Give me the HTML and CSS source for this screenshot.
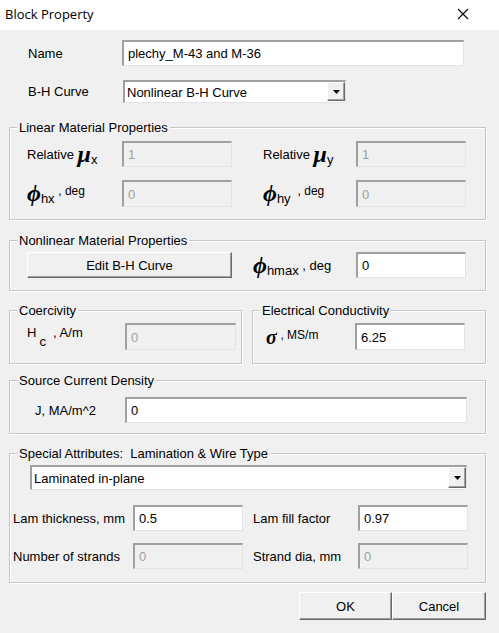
FILE: index.html
```html
<!DOCTYPE html>
<html>
<head>
<meta charset="utf-8">
<title>Block Property</title>
<link rel="stylesheet" href="styles.css">
</head>
<body>
<div class="dialog">
  <div class="titlebar">
    <span class="title">Block Property</span>
    <svg class="close" width="12" height="12" viewBox="0 0 12 12"><path d="M1 1 L11 11 M11 1 L1 11" stroke="#000" stroke-width="1.1" fill="none"/></svg>
  </div>
  <div class="content">
    <div class="row row-name">
      <span class="lbl lbl-name">Name</span>
      <div class="field w342">plechy_M-43 and M-36</div>
    </div>
    <div class="row row-bh">
      <span class="lbl lbl-bh">B-H Curve</span>
      <div class="select w223"><span class="sel-val">Nonlinear B-H Curve</span><span class="arrow"><svg width="7" height="4" viewBox="0 0 7 4"><path d="M0 0 H7 L3.5 4 Z" fill="#000"/></svg></span></div>
    </div>

    <div class="group g-linear">
      <span class="legend">Linear Material Properties</span>
      <div class="row lin-row h26">
        <span class="lbl w95">Relative <span class="greek mu">μ</span><span class="sub">x</span></span>
        <div class="field disabled w110">1</div>
        <span class="lbl w93 ml31">Relative <span class="greek mu">μ</span><span class="sub">y</span></span>
        <div class="field disabled w110">1</div>
      </div>
      <div class="row lin-row h27 mt13">
        <span class="lbl w95"><span class="greek phi">ϕ</span><span class="sub">hx</span> <span class="sup">, deg</span></span>
        <div class="field disabled w110">0</div>
        <span class="lbl w93 ml31"><span class="greek phi">ϕ</span><span class="sub">hy</span> <span class="sup">&nbsp;, deg</span></span>
        <div class="field disabled w110">0</div>
      </div>
    </div>

    <div class="group g-nonlinear">
      <span class="legend">Nonlinear Material Properties</span>
      <div class="row h26">
        <div class="btn w205">Edit B-H Curve</div>
        <span class="lbl w103 ml21"><span class="greek phi">ϕ</span><span class="sub">hmax</span> , deg</span>
        <div class="field w110">0</div>
      </div>
    </div>

    <div class="pair">
      <div class="group g-coer">
        <span class="legend">Coercivity</span>
        <div class="row h27">
          <span class="lbl w98">H<span class="subc">c</span> &nbsp;, A/m</span>
          <div class="field disabled w111">0</div>
        </div>
      </div>
      <div class="group g-cond">
        <span class="legend">Electrical Conductivity</span>
        <div class="row h27">
          <span class="lbl w89"><span class="greek sigma">σ</span> <span class="small">, MS/m</span></span>
          <div class="field w110">6.25</div>
        </div>
      </div>
    </div>

    <div class="group g-source">
      <span class="legend">Source Current Density</span>
      <div class="row h26">
        <span class="lbl w90">J, MA/m^2</span>
        <div class="field w342">0</div>
      </div>
    </div>

    <div class="group g-special">
      <span class="legend">Special Attributes:&nbsp; Lamination &amp; Wire Type</span>
      <div class="select w437 sel-lam"><span class="sel-val">Laminated in-plane</span><span class="arrow"><svg width="7" height="4" viewBox="0 0 7 4"><path d="M0 0 H7 L3.5 4 Z" fill="#000"/></svg></span></div>
      <div class="row h26 mt15 sp-row">
        <span class="lbl w120">Lam thickness, mm</span>
        <div class="field w110">0.5</div>
        <span class="lbl w105 ml10">Lam fill factor</span>
        <div class="field w110">0.97</div>
      </div>
      <div class="row h26 mt12 sp-row">
        <span class="lbl w120">Number of strands</span>
        <div class="field disabled w110">0</div>
        <span class="lbl w105 ml10">Strand dia, mm</span>
        <div class="field disabled w110">0</div>
      </div>
    </div>

    <div class="buttons">
      <div class="btn w93">OK</div>
      <div class="btn w94">Cancel</div>
    </div>
  </div>
</div>
</body>
</html>
```

FILE: styles.css
```css
html, body {
  margin: 0;
  padding: 0;
}
body {
  width: 499px;
  height: 633px;
  background: #f0f0f0;
  font-family: "Liberation Sans", Arial, sans-serif;
  font-size: 13px;
  color: #000;
  overflow: hidden;
}
.dialog {
  width: 499px;
  height: 633px;
  background: #f0f0f0;
}
.titlebar {
  height: 30px;
  background: #fff;
  display: flex;
  align-items: center;
  justify-content: space-between;
  padding: 0 30px 0 5px;
  box-sizing: border-box;
}
.title {
  font-family: "Open Sans", "Noto Sans", sans-serif;
  font-size: 13px;
  margin-top: -2px;
}
.close {
  margin-top: -2px;
}
.content {
  width: 477px;
  margin-left: 9px;
  padding-top: 10px;
}
.row {
  display: flex;
  align-items: center;
}
.row-name { height: 26px; padding-left: 19px; }
.row-bh { height: 23px; padding-left: 19px; margin-top: 14px; }
.lbl-name { width: 94px; }
.lbl-bh { width: 95px; }
.lbl { white-space: nowrap; }

.h26 { height: 26px; }
.h27 { height: 27px; }
.mt12 { margin-top: 12px; }
.mt13 { margin-top: 13px; }
.mt15 { margin-top: 15px; }
.ml10 { margin-left: 10px; }
.ml21 { margin-left: 21px; }
.ml31 { margin-left: 31px; }

.w89 { width: 89px; }
.w90 { width: 90px; }
.w93 { width: 93px; }
.w94 { width: 94px; }
.w95 { width: 95px; }
.w98 { width: 98px; }
.w103 { width: 103px; }
.w105 { width: 105px; }
.w110 { width: 110px; }
.w111 { width: 111px; }
.w120 { width: 120px; }
.w205 { width: 205px; }
.w223 { width: 223px; }
.w342 { width: 342px; }
.w437 { width: 437px; }

.field {
  box-sizing: border-box;
  height: 100%;
  background: #fff;
  border-top: 2px solid #a0a0a0;
  border-left: 2px solid #a0a0a0;
  border-right: 1px solid #e3e3e3;
  border-bottom: 1px solid #e3e3e3;
  padding-left: 4px;
  display: flex;
  align-items: center;
  white-space: nowrap;
  flex: none;
}
.field.disabled {
  background: #f0f0f0;
  color: #a0a0a0;
}

.select {
  box-sizing: border-box;
  height: 100%;
  background: #fff;
  border-top: 2px solid #a0a0a0;
  border-left: 2px solid #a0a0a0;
  border-right: 1px solid #e3e3e3;
  border-bottom: 1px solid #e3e3e3;
  display: flex;
  align-items: stretch;
  flex: none;
}
.sel-val {
  flex: 1;
  display: flex;
  align-items: center;
  padding-left: 2px;
}
.arrow {
  width: 18px;
  box-sizing: border-box;
  background: #f0f0f0;
  border-top: 1px solid #fff;
  border-left: 1px solid #fff;
  border-right: 1px solid #696969;
  border-bottom: 1px solid #696969;
  box-shadow: inset -1px -1px #a0a0a0;
  display: flex;
  align-items: center;
  justify-content: center;
  margin: 0 0 1px 0;
}
.sel-lam {
  height: 25px;
  margin-left: 20px;
}

.group {
  position: relative;
  box-sizing: border-box;
  border: 1px solid #c6c6c6;
  box-shadow: 1px 1px 0 #fff, inset 1px 1px 0 #fff;
}
.legend {
  position: absolute;
  left: 7px;
  top: -8px;
  padding: 0 2px;
  line-height: 15px;
  background: #f0f0f0;
  white-space: nowrap;
}
.g-linear {
  margin-top: 24px;
  height: 93px;
  padding: 13px 0 0 17px;
}
.g-nonlinear {
  margin-top: 20px;
  height: 51px;
  padding: 11px 0 0 17px;
}
.pair {
  display: flex;
  margin-top: 19px;
  gap: 10px;
}
.g-coer {
  width: 233px;
  height: 54px;
  padding: 12px 0 0 17px;
}
.g-cond {
  width: 234px;
  height: 54px;
  padding: 12px 0 0 13px;
}
.g-source {
  margin-top: 16px;
  height: 54px;
  padding: 16px 0 0 25px;
}
.g-special {
  margin-top: 19px;
  height: 130px;
  padding-top: 11px;
}
.sp-row {
  padding-left: 3px;
}

.btn {
  box-sizing: border-box;
  height: 100%;
  background: #f0f0f0;
  border-top: 1px solid #fff;
  border-left: 1px solid #fff;
  border-right: 1px solid #696969;
  border-bottom: 1px solid #696969;
  box-shadow: inset -1px -1px #a0a0a0;
  display: flex;
  align-items: center;
  justify-content: center;
  flex: none;
}
.buttons {
  display: flex;
  justify-content: flex-end;
  height: 28px;
  margin-top: 9px;
}

.greek {
  font-family: "Liberation Serif", "DejaVu Serif", serif;
  font-weight: bold;
  font-style: italic;
}
.mu {
  font-size: 24px;
  vertical-align: -3px;
  line-height: 1;
}
.phi {
  font-size: 24px;
  vertical-align: -3px;
  line-height: 1;
}
.sigma {
  font-size: 20px;
  line-height: 1;
  vertical-align: -3px;
}
.sub {
  font-size: 13px;
  vertical-align: -5px;
}
.subc {
  font-size: 13px;
  vertical-align: -9px;
  margin-left: 3px;
}
.sup {
  font-size: 12px;
  vertical-align: 3px;
}
.small {
  font-size: 12px;
  vertical-align: 2px;
}
```
